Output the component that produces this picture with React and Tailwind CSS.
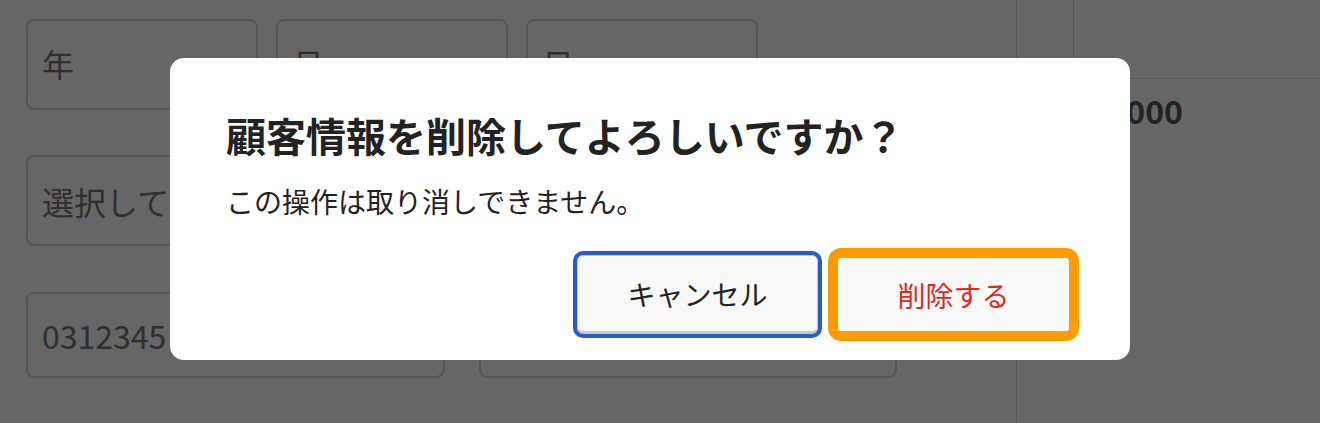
import React from 'react'

const field = 'flex items-center pl-[14px] border-2 border-[#d4d4d4] rounded-[8px] bg-white text-[32px] text-[#757575]'

function FormBehind() {
  return (
    <div className="flex h-full">
      <div className="flex flex-col pl-[26px] pt-[19px] w-[1016px]">
        <div className="flex gap-[18px]">
          <div className={`${field} w-[232px] h-[91px] pb-[4px]`}>年</div>
          <div className={`${field} w-[232px] h-[91px] pb-[4px]`}>月</div>
          <div className={`${field} w-[232px] h-[91px] pb-[4px]`}>日</div>
        </div>
        <div className={`${field} mt-[45px] w-[482px] h-[91px]`}>選択して</div>
        <div className="flex gap-[34px] mt-[46px]">
          <div className={`${field} w-[419px] h-[86px]`}>0312345</div>
          <div className={`${field} w-[418px] h-[86px]`}></div>
        </div>
      </div>

      {/* right summary column */}
      <div className="flex-1 border-l border-[#d4d4d4] flex flex-col">
        <div className="h-[79px] border-b border-[#d4d4d4] flex">
          <div className="w-[57px] border-r border-[#d4d4d4]" />
        </div>
        <div className="w-[166px] pt-[7px] text-right text-[32px] leading-[48px] font-bold text-[#555]">
          ¥10,000
        </div>
      </div>
    </div>
  )
}

export default function App() {
  return (
    <div className="relative w-[1320px] h-[423px] overflow-hidden bg-white font-['Noto_Sans_CJK_JP',sans-serif]">
      <FormBehind />

      <div className="absolute inset-0 bg-black/60" />

      <div className="absolute left-[170px] top-[58px] w-[960px] bg-white rounded-[14px] pl-[56px] pr-[51px] pt-[47px] pb-[19px] flex flex-col">
        <h2 className="text-[40px] leading-[60px] font-bold text-[#222]">
          顧客情報を削除してよろしいですか？
        </h2>
        <p className="mt-[15px] text-[28px] leading-[42px] text-[#222]">
          この操作は取り消しできません。
        </p>
        <div className="mt-[26px] flex justify-end items-center gap-[10px]">
          <button className="w-[241px] h-[79px] rounded-[6px] bg-[#f8f8f8] border border-[#c8c8c8] border-b-[3px] ring-4 ring-[#2a5bc8] text-[28px] text-[#222]">
            キャンセル
          </button>
          <button className="w-[251px] h-[93px] rounded-[13px] bg-[#f9f9f9] border-[10px] border-[#ff9a00] text-[28px] text-[#e0281c]">
            削除する
          </button>
        </div>
      </div>
    </div>
  )
}
